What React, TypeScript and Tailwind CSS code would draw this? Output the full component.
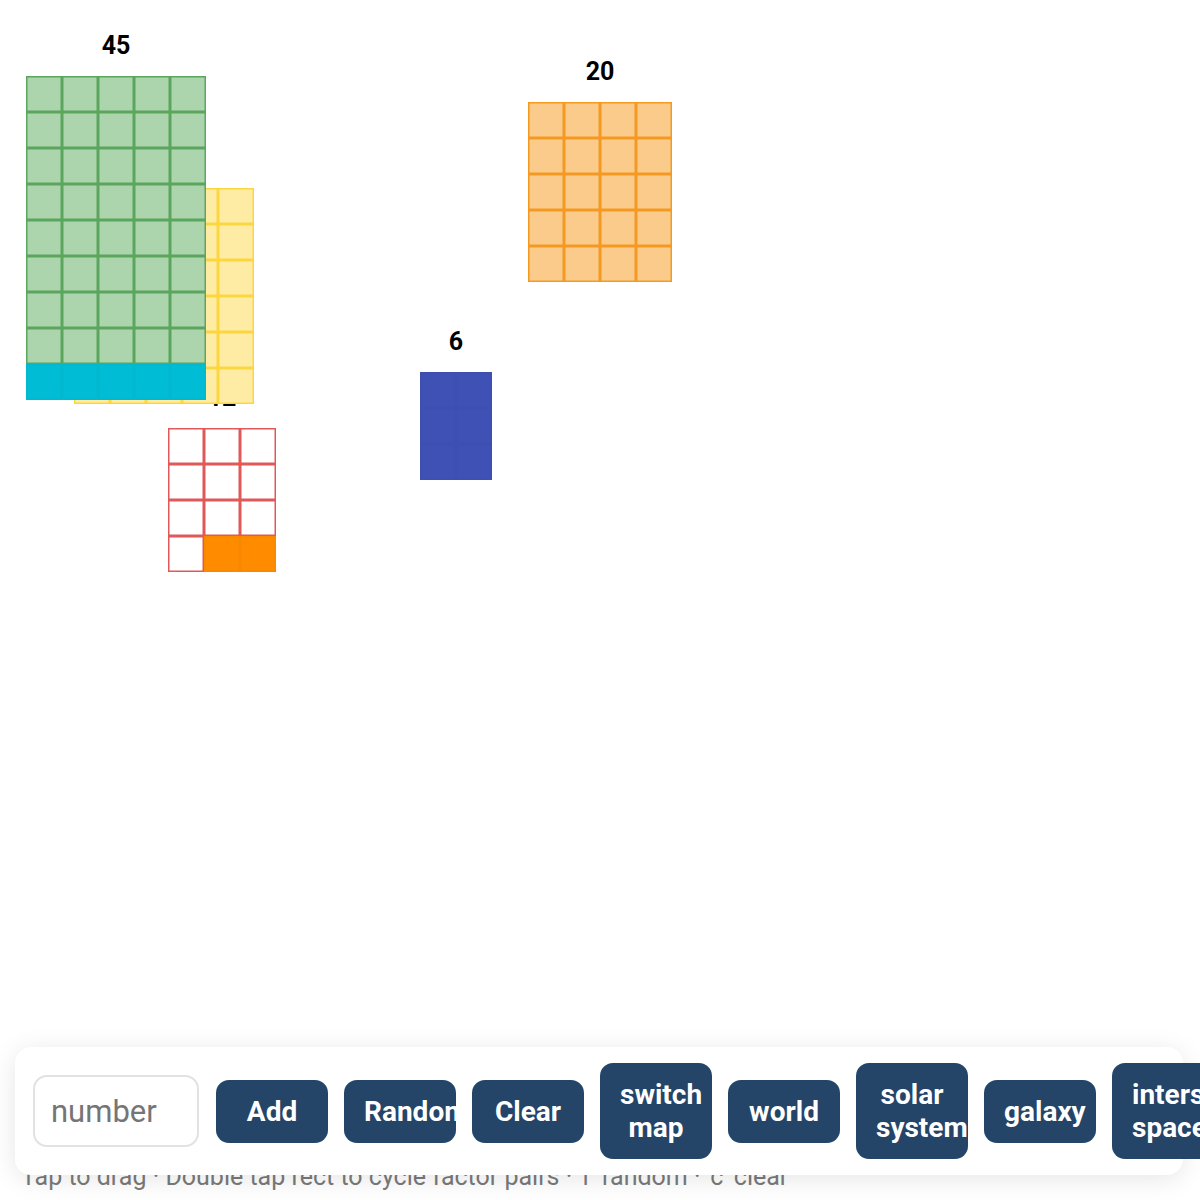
import type { ReactNode } from 'react'

const CELL = 36

interface BlockProps {
  x: number
  y: number
  cols: number
  rows: number
  fill: string
  stroke: string
  label: string
  // cells painted solid, index counted row by row
  marked?: number[]
  markFill?: string
  markStroke?: string
}

function Block({ x, y, cols, rows, fill, stroke, label, marked = [], markFill, markStroke }: BlockProps) {
  const w = cols * CELL
  const h = rows * CELL
  const cells: ReactNode[] = []
  for (let r = 0; r < rows; r++) {
    for (let c = 0; c < cols; c++) {
      const i = r * cols + c
      const hit = marked.includes(i)
      cells.push(
        <rect
          key={i}
          x={c * CELL + 0.75}
          y={r * CELL + 0.75}
          width={CELL - 1.5}
          height={CELL - 1.5}
          fill={hit ? markFill : fill}
          stroke={hit ? markStroke : stroke}
          strokeWidth="1.5"
        />
      )
    }
  }

  return (
    <div className="absolute" style={{ left: x, top: y, width: w, height: h }}>
      <div className="absolute left-0 right-0 top-[-43px] h-[26px] text-center text-[25px] leading-[26px] font-bold text-black">
        {label}
      </div>
      <svg width={w} height={h} viewBox={`0 0 ${w} ${h}`} className="block">
        {cells}
      </svg>
    </div>
  )
}

const buttons = ['Add', 'Random', 'Clear', 'switch map', 'world', 'solar system', 'galaxy', 'interstellar space']

export default function App() {
  return (
    <div className="relative flex flex-col h-[1200px] w-full overflow-hidden bg-white font-[Roboto,sans-serif]">
      <div className="relative flex-1">
        <Block x={528} y={102} cols={4} rows={5} fill="#fbcb8c" stroke="#f49a22" label="20" />
        <Block x={420} y={372} cols={2} rows={3} fill="#3f51b5" stroke="#3d4fb1" label="6" />
        <Block
          x={168}
          y={428}
          cols={3}
          rows={4}
          fill="#ffffff"
          stroke="#e05858"
          label="12"
          marked={[10, 11]}
          markFill="#ff8c00"
          markStroke="#f98800"
        />
        <Block x={74} y={188} cols={5} rows={6} fill="#ffeca4" stroke="#fbd63f" label="30" />
        <Block
          x={26}
          y={76}
          cols={5}
          rows={9}
          fill="#acd4ad"
          stroke="#5aa65d"
          label="45"
          marked={[40, 41, 42, 43, 44]}
          markFill="#00bcd4"
          markStroke="#02b8cf"
        />
      </div>

      <p className="pl-[21px] pb-[9px] text-[25px] leading-[29px] text-[#7a7a7a] whitespace-nowrap">
        Tap to drag · Double tap rect to cycle factor pairs · 'r' random · 'c' clear
      </p>

      <div className="absolute left-[15px] right-[17px] bottom-[25px] flex items-center gap-4 rounded-2xl bg-white py-4 pl-[18px] shadow-[0_4px_26px_rgba(0,0,0,0.1)]">
        <input
          placeholder="number"
          className="w-[166px] h-[72px] shrink-0 mr-px rounded-[14px] border-2 border-[#e2e2e2] bg-white pl-[16px] text-[31px] text-[#333] placeholder:text-[#757575] outline-none"
        />
        {buttons.map(b => (
          <button
            key={b}
            className="w-[112px] shrink-0 overflow-hidden rounded-[13px] bg-[#244468] px-5 py-[15px] text-center text-[28px] leading-[33px] font-bold text-white"
          >
            {b}
          </button>
        ))}
      </div>
    </div>
  )
}
